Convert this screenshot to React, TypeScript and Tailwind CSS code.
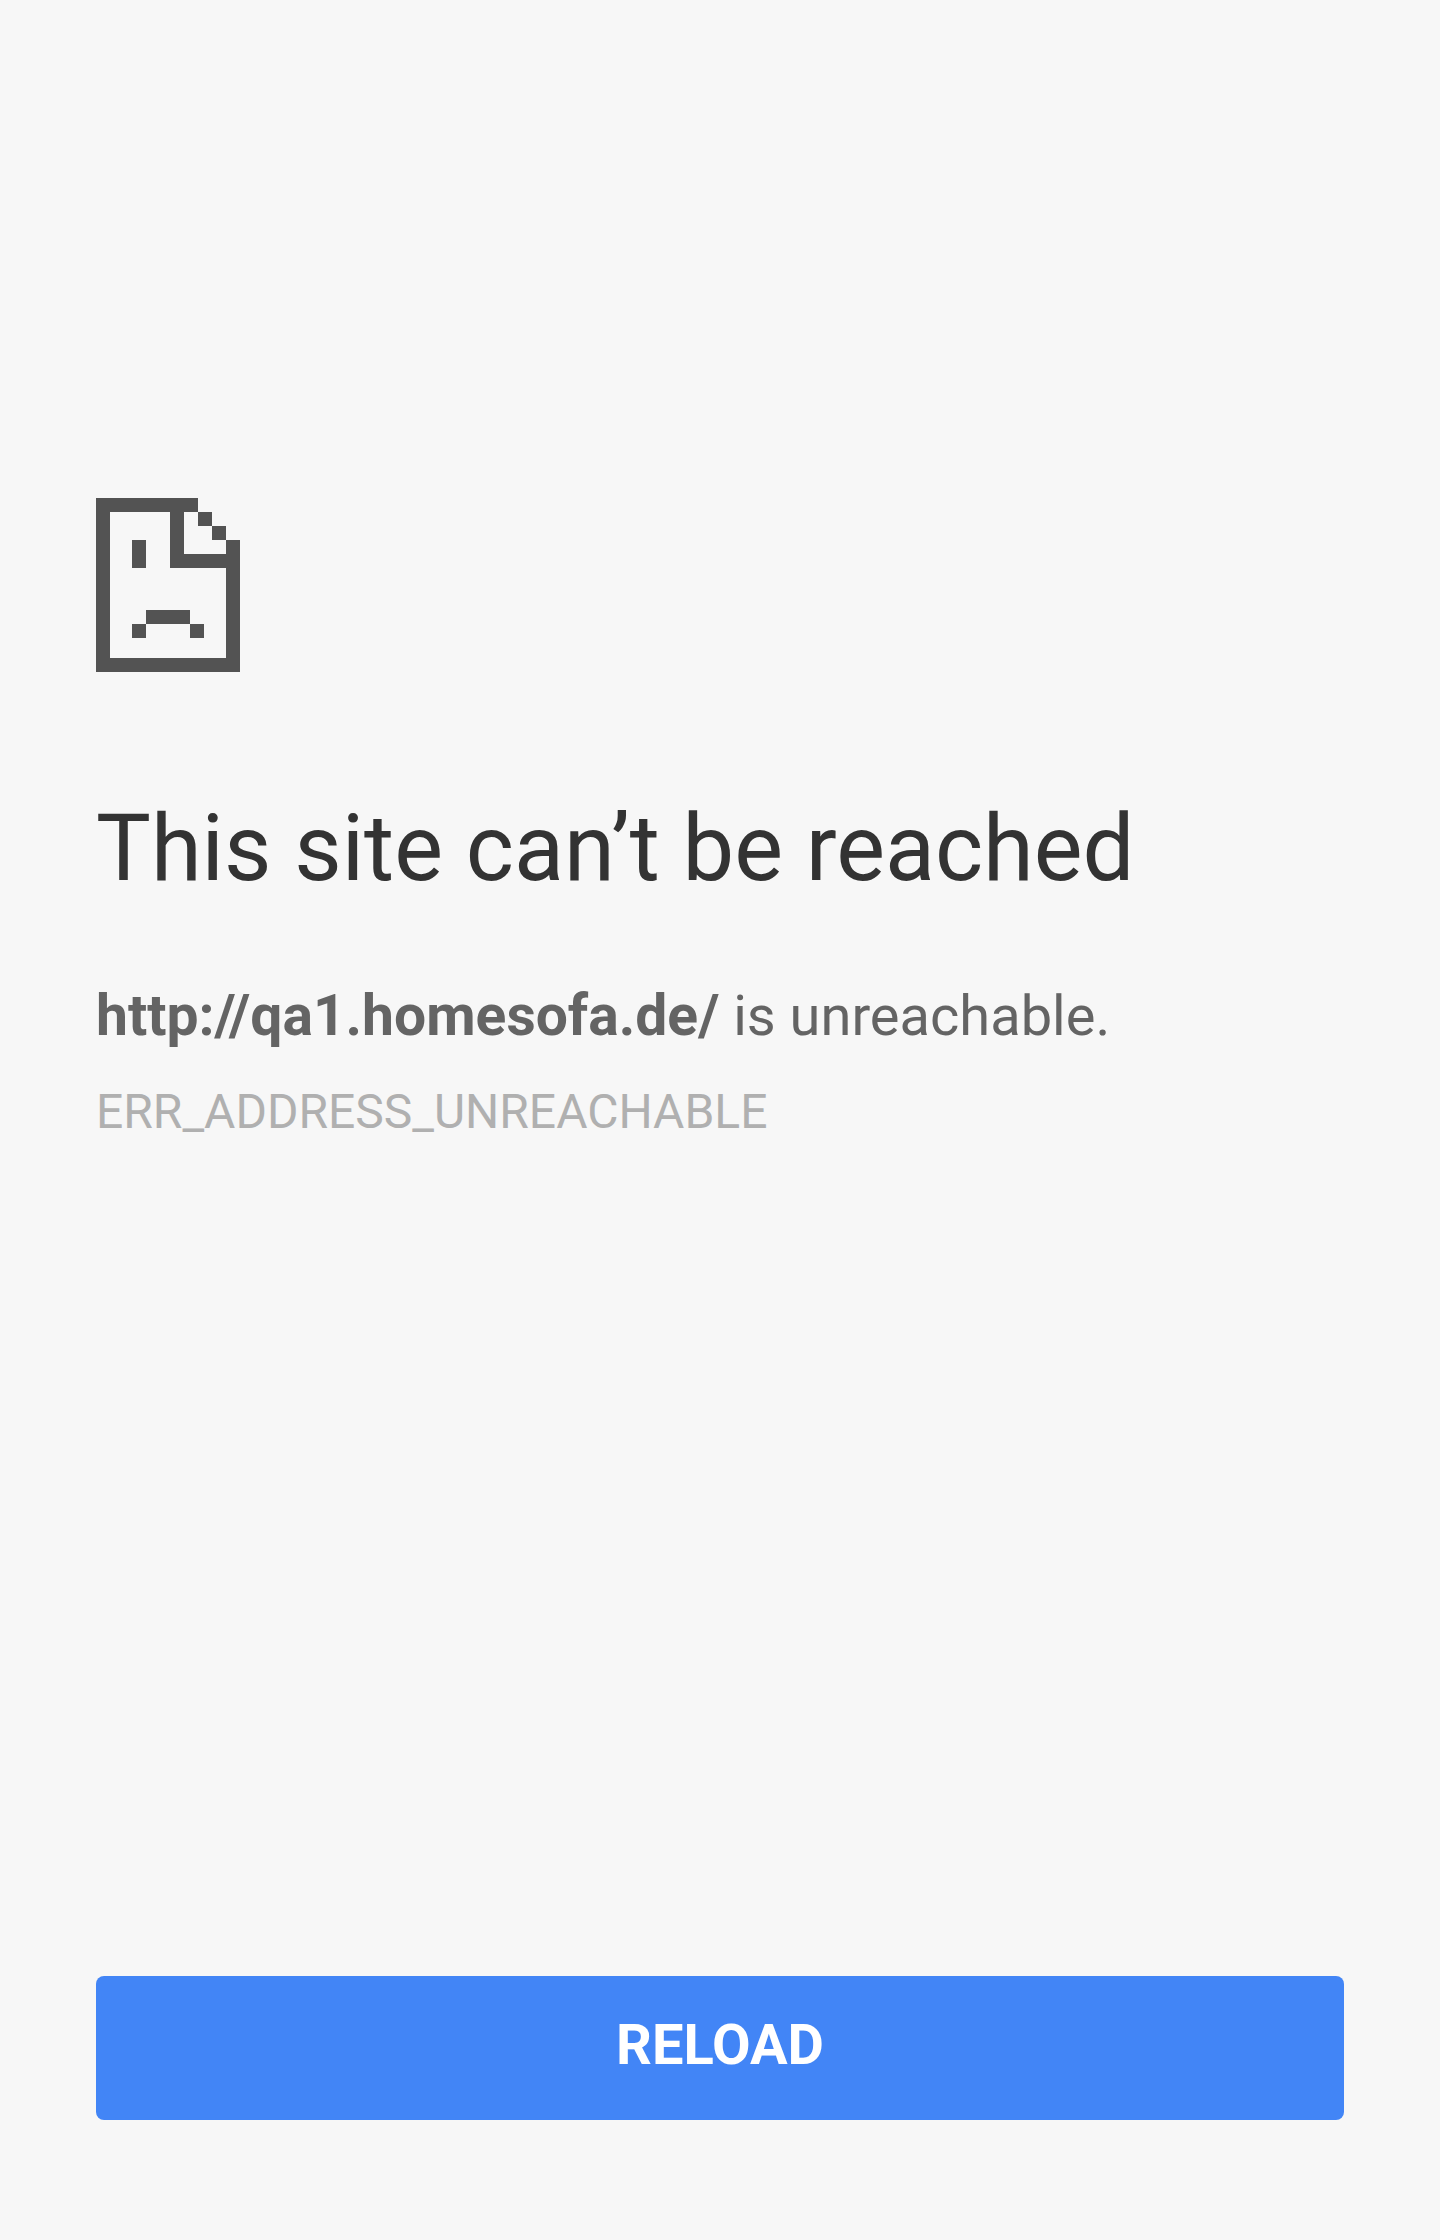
function SadPageIcon() {
  return (
    <svg
      className="block h-[174px] w-36 shrink-0"
      viewBox="0 0 144 174"
      fill="#535353"
      shapeRendering="crispEdges"
      aria-hidden="true"
    >
      <path
        fillRule="evenodd"
        d="M0 0H102V14H88V56H130V42H144V174H0ZM14 14V160H130V70H74V14Z"
      />
      <path d="M102 14h14v14h-14zM116 28h14v14h-14z" />
      <path d="M36 42h14v28h-14z" />
      <path d="M50 112h44v14h-44zM36 126h14v14h-14zM94 126h14v14h-14z" />
    </svg>
  );
}

export default function App() {
  return (
    <div className="flex min-h-screen flex-col justify-between gap-24 bg-[#f7f7f7] px-24 pt-[498px] pb-[120px] font-[Roboto,sans-serif]">
      <main>
        <SadPageIcon />
        <h1 className="mt-[123px] text-[92px] leading-[108px] text-[#333333]">
          This site can’t be reached
        </h1>
        <p className="mt-[71px] text-[56px] leading-[84px] text-[#646464]">
          <strong className="text-[57px] font-bold">http://qa1.homesofa.de/</strong> is unreachable.
        </p>
        <p className="mt-[18px] text-[48px] leading-[72px] text-[#b0b0b0]">
          ERR_ADDRESS_UNREACHABLE
        </p>
      </main>
      <button
        type="button"
        onClick={() => window.location.reload()}
        className="flex h-36 w-full cursor-pointer items-center justify-center rounded-lg bg-[#4285f6] pb-1.5 text-[56px] leading-[84px] font-bold text-white"
      >
        RELOAD
      </button>
    </div>
  );
}
